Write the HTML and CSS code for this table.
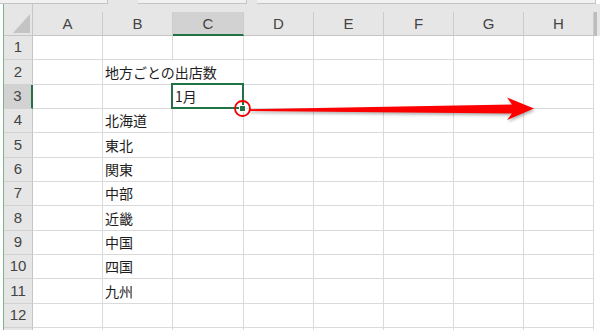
FILE: index.html
```html
<!DOCTYPE html>
<html lang="ja">
<head>
<meta charset="utf-8">
<title>Excel</title>
<link rel="stylesheet" href="styles.css">
</head>
<body>
<div class="page">
  <div class="strip">
    <div class="box b1"></div><div class="gap g1"></div><div class="box b2"></div><div class="gap g2"></div><div class="box b3"></div>
  </div>
  <div class="main">
    <div class="gutter"></div>
    <div class="sheet">
      <div class="row hrow">
        <div class="corner"><div class="tri"></div></div>
        <div class="ch">A</div><div class="ch">B</div><div class="ch sel-col">C</div><div class="ch">D</div><div class="ch">E</div><div class="ch">F</div><div class="ch">G</div><div class="ch">H</div><div class="edge"></div>
      </div>
      <div class="row h24"><div class="rh">1</div><div class="c"></div><div class="c"></div><div class="c"></div><div class="c"></div><div class="c"></div><div class="c"></div><div class="c"></div><div class="c"></div><div class="e"></div></div>
      <div class="row h25"><div class="rh">2</div><div class="c"></div><div class="c spill">地方ごとの出店数</div><div class="c"></div><div class="c"></div><div class="c"></div><div class="c"></div><div class="c"></div><div class="c"></div><div class="e"></div></div>
      <div class="row h24"><div class="rh sel-row">3</div><div class="c"></div><div class="c"></div><div class="c">1月</div><div class="c"></div><div class="c"></div><div class="c"></div><div class="c"></div><div class="c"></div><div class="e"></div></div>
      <div class="row h24"><div class="rh">4</div><div class="c"></div><div class="c">北海道</div><div class="c"></div><div class="c"></div><div class="c"></div><div class="c"></div><div class="c"></div><div class="c"></div><div class="e"></div></div>
      <div class="row h25"><div class="rh">5</div><div class="c"></div><div class="c">東北</div><div class="c"></div><div class="c"></div><div class="c"></div><div class="c"></div><div class="c"></div><div class="c"></div><div class="e"></div></div>
      <div class="row h24"><div class="rh">6</div><div class="c"></div><div class="c">関東</div><div class="c"></div><div class="c"></div><div class="c"></div><div class="c"></div><div class="c"></div><div class="c"></div><div class="e"></div></div>
      <div class="row h24"><div class="rh">7</div><div class="c"></div><div class="c">中部</div><div class="c"></div><div class="c"></div><div class="c"></div><div class="c"></div><div class="c"></div><div class="c"></div><div class="e"></div></div>
      <div class="row h25"><div class="rh">8</div><div class="c"></div><div class="c">近畿</div><div class="c"></div><div class="c"></div><div class="c"></div><div class="c"></div><div class="c"></div><div class="c"></div><div class="e"></div></div>
      <div class="row h24"><div class="rh">9</div><div class="c"></div><div class="c">中国</div><div class="c"></div><div class="c"></div><div class="c"></div><div class="c"></div><div class="c"></div><div class="c"></div><div class="e"></div></div>
      <div class="row h24"><div class="rh">10</div><div class="c"></div><div class="c">四国</div><div class="c"></div><div class="c"></div><div class="c"></div><div class="c"></div><div class="c"></div><div class="c"></div><div class="e"></div></div>
      <div class="row h25"><div class="rh">11</div><div class="c"></div><div class="c">九州</div><div class="c"></div><div class="c"></div><div class="c"></div><div class="c"></div><div class="c"></div><div class="c"></div><div class="e"></div></div>
      <div class="row h24"><div class="rh">12</div><div class="c"></div><div class="c"></div><div class="c"></div><div class="c"></div><div class="c"></div><div class="c"></div><div class="c"></div><div class="c"></div><div class="e"></div></div>
      <div class="row h24"><div class="rh"></div><div class="c"></div><div class="c"></div><div class="c"></div><div class="c"></div><div class="c"></div><div class="c"></div><div class="c"></div><div class="c"></div><div class="e"></div></div>
    </div>
  </div>
</div>
<div class="selbox"></div>
<div class="handle"></div>
<svg class="overlay" width="600" height="330" viewBox="0 0 600 330" xmlns="http://www.w3.org/2000/svg">
  <polygon class="arrow" points="249,109.2 512,104.6 507,97.5 534,108.5 507,120 512,113.4 249,111"/>
  <circle cx="242.5" cy="108.5" r="7.5" fill="none" stroke="#ee0000" stroke-width="1.8"/>
</svg>
</body>
</html>
```
FILE: styles.css
```css
html, body {
  margin: 0;
  padding: 0;
}
body {
  width: 600px;
  height: 330px;
  overflow: hidden;
  background: #ffffff;
  position: relative;
  font-family: "Noto Sans CJK JP", "Noto Sans", sans-serif;
}
.page {
  display: flex;
  flex-direction: column;
  width: 600px;
  height: 330px;
}
.strip {
  display: flex;
  height: 4px;
  flex: none;
}
.box {
  height: 4px;
  box-sizing: border-box;
  background: #f1f1f1;
  border-bottom: 1px solid #c4c4c4;
  border-right: 1px solid #c4c4c4;
}
.gap {
  height: 4px;
  background: #e6e6e6;
}
.b1 { width: 108px; }
.g1 { width: 30px; }
.b2 { width: 109px; }
.g2 { width: 10px; }
.b3 { width: 339px; }
.main {
  display: flex;
  flex: 1;
  min-height: 0;
}
.gutter {
  width: 3px;
  flex: none;
  border-right: 1px solid #7fb08c;
}
.sheet {
  width: 596px;
  flex: none;
  overflow: hidden;
}
.row {
  display: grid;
  grid-template-columns: 29px 70px 70px 71px 70px 70px 70px 70px 70px 3px;
}
.h24 { height: 24px; }
.h25 { height: 25px; }
.hrow {
  height: 32px;
  background: #e6e6e6;
}
.corner {
  box-sizing: border-box;
  border-right: 1px solid #c6c6c6;
  border-bottom: 1px solid #c6c6c6;
  display: flex;
  justify-content: flex-end;
  align-items: flex-end;
  padding: 0 2px 2px 0;
}
.tri {
  width: 17px;
  height: 19px;
  background: #c4c4c4;
  clip-path: polygon(100% 0, 100% 100%, 0 100%);
}
.ch {
  align-self: end;
  height: 24px;
  box-sizing: border-box;
  border-right: 1px solid #cbcbcb;
  border-bottom: 1px solid #c6c6c6;
  display: flex;
  align-items: center;
  justify-content: center;
  font-family: "Liberation Sans", Arial, sans-serif;
  font-size: 15px;
  color: #444444;
}
.ch.sel-col {
  background: #d2d2d2;
  border-bottom: 2px solid #217346;
  padding-top: 1px;
}
.edge {
  background: #bdbdbd;
  margin-top: 8px;
}
.rh {
  box-sizing: border-box;
  background: #e6e6e6;
  border-right: 1px solid #c6c6c6;
  border-bottom: 1px solid #d2d2d2;
  display: flex;
  align-items: center;
  justify-content: center;
  font-family: "Liberation Sans", Arial, sans-serif;
  font-size: 15px;
  color: #444444;
  padding-bottom: 2px;
}
.rh.sel-row {
  background: #d2d2d2;
  border-right: 2px solid #217346;
}
.c {
  box-sizing: border-box;
  border-right: 1px solid #dadada;
  border-bottom: 1px solid #dadada;
  display: flex;
  align-items: center;
  padding: 0 0 1px 2px;
  font-size: 14px;
  line-height: 1;
  color: #1e1e1e;
  white-space: nowrap;
  overflow: visible;
}
.c.spill {
  border-right-color: transparent;
}
.e {
  background: #ffffff;
}
.selbox {
  position: absolute;
  left: 171px;
  top: 83px;
  width: 73px;
  height: 26px;
  box-sizing: border-box;
  border: 2px solid #217346;
}
.handle {
  position: absolute;
  left: 239px;
  top: 105px;
  width: 5px;
  height: 5px;
  background: #217346;
  border: 1px solid #ffffff;
}
.overlay {
  position: absolute;
  left: 0;
  top: 0;
  pointer-events: none;
}
.arrow {
  fill: #ff0000;
  filter: drop-shadow(1px 2px 1.5px rgba(0, 0, 0, 0.3));
}
```
